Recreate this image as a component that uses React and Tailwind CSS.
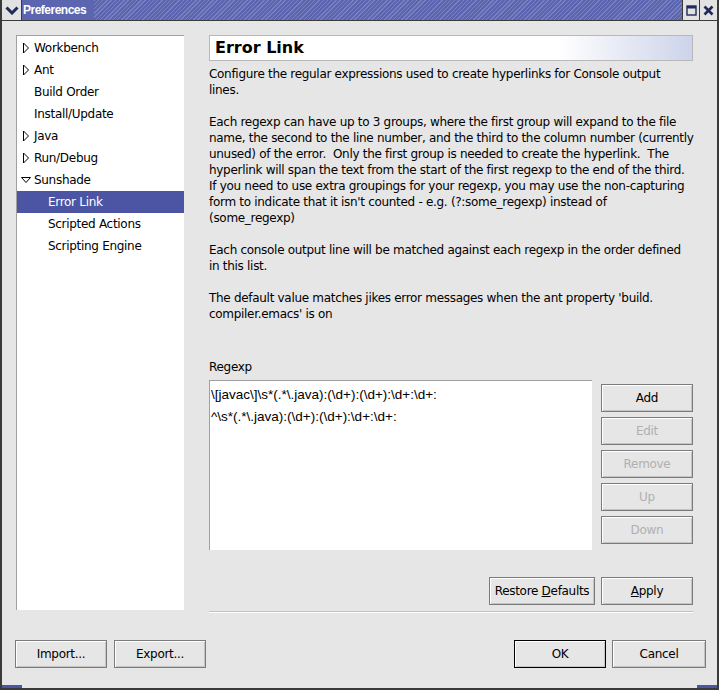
import React from 'react';

const tree = [
  { label: 'Workbench', arrow: 'right', depth: 0 },
  { label: 'Ant', arrow: 'right', depth: 0 },
  { label: 'Build Order', depth: 0 },
  { label: 'Install/Update', depth: 0 },
  { label: 'Java', arrow: 'right', depth: 0 },
  { label: 'Run/Debug', arrow: 'right', depth: 0 },
  { label: 'Sunshade', arrow: 'down', depth: 0 },
  { label: 'Error Link', depth: 1, selected: true },
  { label: 'Scripted Actions', depth: 1 },
  { label: 'Scripting Engine', depth: 1 },
];

const paragraphs = [
  ['Configure the regular expressions used to create hyperlinks for Console output', 'lines.'],
  [
    'Each regexp can have up to 3 groups, where the first group will expand to the file',
    'name, the second to the line number, and the third to the column number (currently',
    'unused) of the error.\u00a0 Only the first group is needed to create the hyperlink.\u00a0 The',
    'hyperlink will span the text from the start of the first regexp to the end of the third.',
    'If you need to use extra groupings for your regexp, you may use the non-capturing',
    "form to indicate that it isn't counted - e.g. (?:some_regexp) instead of",
    '(some_regexp)',
  ],
  ['Each console output line will be matched against each regexp in the order defined', 'in this list.'],
  ["The default value matches jikes error messages when the ant property 'build.", "compiler.emacs' is on"],
];

function Arrow({ dir }) {
  if (dir === 'down') {
    return (
      <svg width="12" height="10" viewBox="0 0 12 10" className="shrink-0">
        <polygon points="1.5,2.5 10.5,2.5 6,7.5" fill="white" stroke="black" strokeWidth="1" />
      </svg>
    );
  }
  return (
    <svg width="12" height="12" viewBox="0 0 12 12" className="shrink-0">
      <polygon points="3.5,1 8.5,6 3.5,11" fill="white" stroke="black" strokeWidth="1" />
    </svg>
  );
}

function Btn({ children, w = 'w-[92px]', disabled, def, className = '' }) {
  return (
    <div
      className={`${w} h-[28px] shrink-0 flex items-center justify-center border ${
        def ? 'border-black' : 'border-[#7b7b7b]'
      } bg-[#e6e6e6] shadow-[inset_1px_1px_0_#ffffff,inset_-1px_-1px_0_#c4c4c4] ${
        disabled ? 'text-[#b0b0b0]' : 'text-black'
      } ${className}`}
    >
      <span className="whitespace-pre">{children}</span>
    </div>
  );
}

export default function App() {
  return (
    <div className="w-[719px] h-[690px] bg-[#e6e6e6] relative overflow-hidden font-['DejaVu_Sans',sans-serif] text-[12px] tracking-[-0.3px] text-black border-l-2 border-r-2 border-b-2 border-[#3a3a3a]">
      {/* title bar */}
      <div className="h-[20px] flex items-stretch bg-[repeating-linear-gradient(135deg,#5c65b0_0px,#5c65b0_2px,#7880c0_2px,#7880c0_3px)]">
        <div className="w-[20px] bg-[#e2e2e2] flex items-center justify-center border-r border-[#3a3a3a]">
          <svg width="14" height="9" viewBox="0 0 14 9">
            <path d="M1.5 1.5 L7 7 L12.5 1.5" fill="none" stroke="#1f2a5a" strokeWidth="3" />
          </svg>
        </div>
        <div className="bg-[#5c65b0] pl-[1px] pr-[8px] flex items-center text-white font-bold text-[12px] font-['Liberation_Sans',sans-serif] tracking-[-0.5px]">
          Preferences
        </div>
        <div className="flex-1" />
        <div className="w-[17px] bg-[#e2e2e2] border-l border-[#3a3a3a] flex items-center justify-center">
          <svg width="11" height="11" viewBox="0 0 11 11">
            <rect x="1" y="1" width="9" height="9" fill="none" stroke="#1f2a5a" strokeWidth="1.4" />
            <rect x="1" y="1" width="9" height="2.5" fill="#1f2a5a" />
          </svg>
        </div>
        <div className="w-[18px] bg-[#e2e2e2] border-l border-[#3a3a3a] flex items-center justify-center">
          <svg width="11" height="11" viewBox="0 0 11 11">
            <path d="M1.5 1.5 L9.5 9.5 M9.5 1.5 L1.5 9.5" stroke="#1f2a5a" strokeWidth="2.6" />
          </svg>
        </div>
      </div>

      <div className="border-t border-[#3a3a3a]" />

      {/* main area */}
      <div className="flex pt-[14px] pl-[14px] pr-[24px]">
        {/* tree */}
        <div className="w-[168px] shrink-0 h-[575px] bg-white border-l border-t border-[#a0a0a0] pt-[1px]">
          {tree.map((t) => (
            <div
              key={t.label}
              className={`h-[22px] flex items-center ${t.selected ? 'bg-[#4b55a3] text-white' : ''}`}
            >
              {t.depth === 0 ? (
                <>
                  <div className="w-[16px] flex items-center justify-center pl-[2px]">
                    {t.arrow && <Arrow dir={t.arrow} />}
                  </div>
                  <span className="pl-[1px]">{t.label}</span>
                </>
              ) : (
                <span className="pl-[31px]">{t.label}</span>
              )}
            </div>
          ))}
        </div>

        {/* right pane */}
        <div className="flex-1 min-w-0 pl-[25px] flex flex-col">
          <div className="h-[26px] border border-[#b8b8b8] bg-[linear-gradient(to_right,#ffffff_0%,#ffffff_72%,#cdd4ea_100%)] flex items-center pl-[5px] font-bold text-[16px] tracking-normal">
            Error Link
          </div>
          <div className="pt-[5px] leading-[16px] flex flex-col gap-[16px]">
            {paragraphs.map((lines, i) => (
              <div key={i}>
                {lines.map((l, j) => (
                  <div key={j} className="whitespace-nowrap">{l}</div>
                ))}
              </div>
            ))}
          </div>

          <div className="mt-[37px] leading-[16px]">Regexp</div>
          <div className="flex gap-[9px] mt-[5px]">
            <div className="w-[383px] h-[170px] bg-white border-l border-t border-[#a0a0a0] pt-[3px] pl-[1px] font-['Liberation_Sans',sans-serif] text-[13.5px] tracking-normal">
              <div className="h-[22px] flex items-center">\[javac\]\s*(.*\.java):(\d+):(\d+):\d+:\d+:</div>
              <div className="h-[22px] flex items-center">^\s*(.*\.java):(\d+):(\d+):\d+:\d+:</div>
            </div>
            <div className="flex flex-col gap-[5px] pt-[4px]">
              <Btn>Add</Btn>
              <Btn disabled>Edit</Btn>
              <Btn disabled>Remove</Btn>
              <Btn disabled>Up</Btn>
              <Btn disabled>Down</Btn>
            </div>
          </div>

          <div className="flex justify-end gap-[6px] mt-[27px]">
            <Btn w="w-[106px]">
              Restore <span className="underline">D</span>efaults
            </Btn>
            <Btn>
              <span className="underline">A</span>pply
            </Btn>
          </div>
          <div className="mt-[6px] border-t border-[#c0c0c0] border-b border-b-white" />
        </div>
      </div>

      {/* bottom bar */}
      <div className="flex items-center pl-[13px] pr-[11px] mt-[27px]">
        <Btn>Import...</Btn>
        <Btn className="ml-[7px]">Export...</Btn>
        <div className="flex-1" />
        <Btn def className="translate-x-[1px]">OK</Btn>
        <Btn className="ml-[7px] w-[94px]">Cancel</Btn>
      </div>

      <div className="absolute left-0 bottom-0 w-[20px] h-[3px] bg-[#4b55a3]" />
      <div className="absolute right-0 bottom-0 w-[20px] h-[3px] bg-[#4b55a3]" />
    </div>
  );
}
